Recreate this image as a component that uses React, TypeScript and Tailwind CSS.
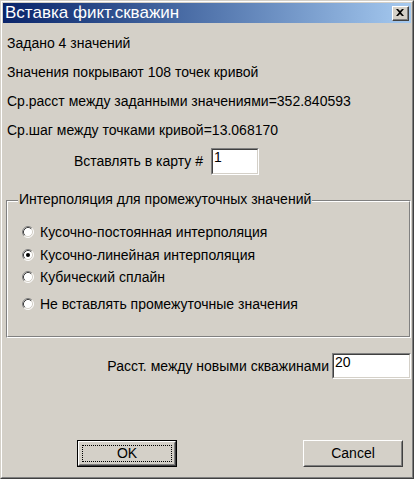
import React, { useState } from 'react';

const font = { fontFamily: '"Liberation Sans", Arial, sans-serif' };

// Classic Win2000 radio mark
const RadioMark = ({ checked }: { checked: boolean }) => (
  <svg width="12" height="12" viewBox="0 0 12 12" className="shrink-0">
    <circle cx="6" cy="6" r="5" fill="#ffffff" />
    <path d="M2.11 9.89 A5.5 5.5 0 0 1 9.89 2.11" fill="none" stroke="#808080" strokeWidth="1" />
    <path d="M9.89 2.11 A5.5 5.5 0 0 1 2.11 9.89" fill="none" stroke="#ffffff" strokeWidth="1" />
    <path d="M2.82 9.18 A4.5 4.5 0 0 1 9.18 2.82" fill="none" stroke="#404040" strokeWidth="1" />
    <path d="M9.18 2.82 A4.5 4.5 0 0 1 2.82 9.18" fill="none" stroke="#d4d0c8" strokeWidth="1" />
    {checked && <circle cx="6" cy="6" r="2" fill="#000000" />}
  </svg>
);

const SunkenInput = ({ value, className }: { value: string; className: string }) => (
  <div className={`border border-t-[#808080] border-l-[#808080] border-r-white border-b-white ${className}`}>
    <div className="h-full border border-t-[#404040] border-l-[#404040] border-r-[#d4d0c8] border-b-[#d4d0c8] bg-white px-px text-[14px] leading-[15px] text-black">
      {value}
    </div>
  </div>
);

const RaisedButton = ({ label, isDefault }: { label: string; isDefault?: boolean }) => {
  const body = (
    <div className="h-full border border-t-white border-l-white border-r-[#404040] border-b-[#404040]">
      <div className="h-full border border-t-[#d4d0c8] border-l-[#d4d0c8] border-r-[#808080] border-b-[#808080] p-[2px]">
        <div
          className={`flex h-full items-center justify-center text-[14px] text-black ${
            isDefault ? 'border border-dotted border-black' : ''
          }`}
        >
          {label}
        </div>
      </div>
    </div>
  );
  return isDefault ? (
    <div className="h-[27px] w-[100px] border border-black">{body}</div>
  ) : (
    <div className="h-[27px] w-[100px]">{body}</div>
  );
};

const options = [
  'Кусочно-постоянная интерполяция',
  'Кусочно-линейная интерполяция',
  'Кубический сплайн',
  'Не вставлять промежуточные значения',
];

const App = () => {
  const [selected, setSelected] = useState(1);

  return (
    <div style={font} className="h-[479px] w-[414px] bg-[#d4d0c8] select-none">
      <div className="h-full border border-t-[#d4d0c8] border-l-[#d4d0c8] border-r-[#404040] border-b-[#404040]">
        <div className="h-full border border-t-white border-l-white border-r-[#808080] border-b-[#808080] p-px">
          {/* Title bar */}
          <div className="flex h-[20px] items-center justify-between bg-gradient-to-r from-[#0a246a] to-[#a6caf0] pl-[2px] pr-[2px]">
            <span className="text-[17px] leading-[20px] text-white">Вставка фикт.скважин</span>
            <div className="h-[15px] w-[17px] border border-t-white border-l-white border-r-[#404040] border-b-[#404040] bg-[#d4d0c8]">
              <div className="flex h-full items-center justify-center border-r border-b border-[#808080]">
                <svg width="8" height="7" viewBox="0 0 8 7">
                  <path d="M0 0h2l2 2 2-2h2L5 3.5 8 7H6L4 5 2 7H0l3-3.5z" fill="#000" />
                </svg>
              </div>
            </div>
          </div>

          {/* Client area */}
          <div className="flex flex-col pt-[6px] text-[14px] leading-[15px] text-black">
            <div className="flex h-[29px] items-center pl-[4px]">Задано 4 значений</div>
            <div className="flex h-[29px] items-center pl-[4px]">Значения покрывают 108 точек кривой</div>
            <div className="flex h-[29px] items-center pl-[4px]">Ср.расст между заданными значениями=352.840593</div>
            <div className="flex h-[29px] items-center pl-[4px]">Ср.шаг между точками кривой=13.068170</div>

            <div className="mt-[3px] flex h-[27px] items-center">
              <div className="w-[200px] text-right">Вставлять в карту #</div>
              <SunkenInput value="1" className="ml-[8px] h-[27px] w-[48px]" />
            </div>

            {/* Group box */}
            <div className="relative mt-[25px] ml-[3px] mr-0 h-[138px] border border-t-[#808080] border-l-[#808080] border-r-white border-b-white">
              <div className="h-full border border-t-white border-l-white border-r-[#808080] border-b-[#808080] pt-[19px]">
                {options.map((opt, i) => (
                  <div
                    key={opt}
                    onClick={() => setSelected(i)}
                    className={`flex h-[22px] items-center gap-[6px] pl-[14px] ${
                      i === 1 ? 'mt-[1px]' : i === 3 ? 'mt-[5px]' : ''
                    }`}
                  >
                    <RadioMark checked={selected === i} />
                    <span>{opt}</span>
                  </div>
                ))}
              </div>
              <span className="absolute -top-[9px] left-[11px] bg-[#d4d0c8] px-px">
                Интерполяция для промежуточных значений
              </span>
            </div>

            <div className="mt-[15px] flex h-[26px] items-center justify-end">
              <span>Расст. между новыми скважинами</span>
              <SunkenInput value="20" className="ml-[3px] h-[26px] w-[79px]" />
            </div>

            <div className="mt-[61px] flex">
              <div className="ml-[74px]">
                <RaisedButton label="OK" isDefault />
              </div>
              <div className="ml-[126px]">
                <RaisedButton label="Cancel" />
              </div>
            </div>
          </div>
        </div>
      </div>
    </div>
  );
};

export default App;
